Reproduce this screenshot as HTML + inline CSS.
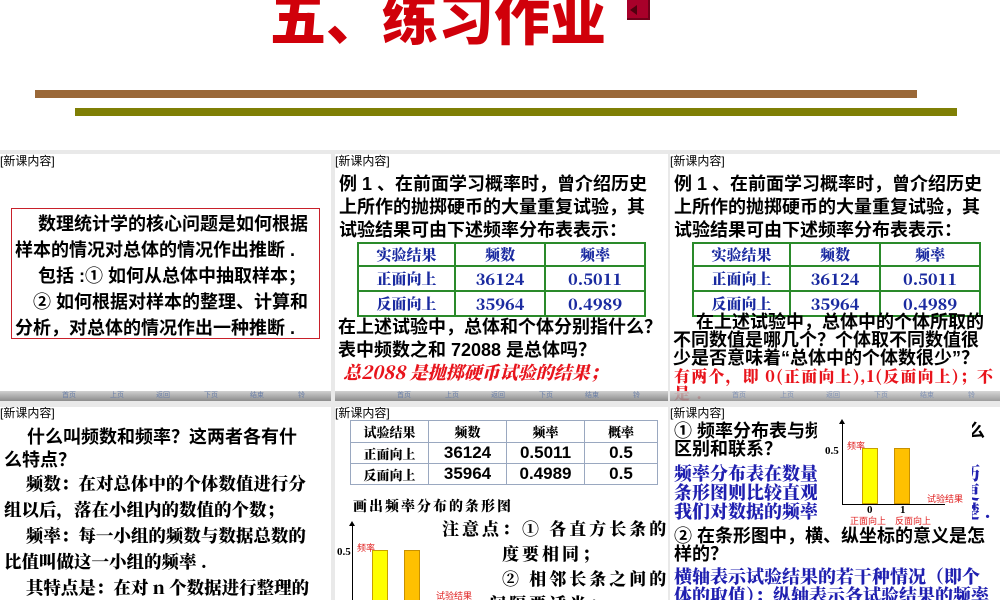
<!DOCTYPE html>
<html><head><meta charset="utf-8"><style>
*{margin:0;padding:0;box-sizing:border-box}
body{width:1000px;height:600px;overflow:hidden;background:#fff;position:relative;font-family:"Liberation Sans","Noto Sans CJK SC",sans-serif}
.a{position:absolute;white-space:nowrap}
.p{position:absolute;background:#fff;overflow:hidden}
.lab{position:absolute;left:0;top:1px;font-size:12px;color:#000;line-height:13px}
.b{font-weight:bold;font-size:18px;line-height:23px;color:#000}
.s{font-family:"Noto Serif CJK SC","Liberation Serif",serif;font-weight:900}
.nav{position:absolute;left:0;right:0;height:10px;background:linear-gradient(#d0d0d0,#8c8c8c);font-size:7px;color:#6a7fa8;line-height:10px}
.nav span{position:absolute;top:0}
table{border-collapse:collapse;position:absolute}
</style></head><body>
<div class="a" style="left:270px;top:-24px;font-size:56px;font-weight:900;color:#d0000a;letter-spacing:0px">五、练习作业</div>
<div class="a" style="left:627px;top:0;width:23px;height:20px;background:#a8002a;border-right:2px solid #70001a;border-bottom:2px solid #70001a"></div>
<div class="a" style="left:630px;top:5px;width:0;height:0;border-top:5px solid transparent;border-bottom:5px solid transparent;border-right:7px solid #50000f"></div>
<div class="a" style="left:35px;top:90px;width:882px;height:8px;background:#9a6838"></div>
<div class="a" style="left:75px;top:108px;width:882px;height:8px;background:#7f7f05"></div>
<div class="a" style="left:0;top:150px;width:1000px;height:450px;background:#e9e9e9"></div>

<!-- Row1 P1 -->
<div class="p" style="left:0;top:154px;width:331px;height:247px">
<div class="lab">[新课内容]</div>
<div class="a" style="left:11px;top:54px;width:309px;height:131px;border:1.5px solid #c8202a"></div>
<div class="a b" style="left:15px;top:57px;line-height:26px">　 数理统计学的核心问题是如何根据<br>样本的情况对总体的情况作出推断 .<br>　 包括 :① 如何从总体中抽取样本；<br>　② 如何根据对样本的整理、计算和<br>分析，对总体的情况作出一种推断 .</div>
<div class="nav" style="top:237px"><span style="left:62px">首页</span><span style="left:110px">上页</span><span style="left:156px">返回</span><span style="left:204px">下页</span><span style="left:250px">结束</span><span style="left:298px">铃</span></div>
</div>

<!-- Row1 P2 -->
<div class="p" style="left:335px;top:154px;width:333px;height:247px">
<div class="lab">[新课内容]</div>
<div class="a b" style="left:4px;top:19px">例 1 、在前面学习概率时，曾介绍历史<br>上所作的抛掷硬币的大量重复试验，其<br>试验结果可由下述频率分布表表示：</div>
<table class="s" style="left:22px;top:88px;width:289px;color:#1a2aa0;font-size:15px;text-align:center;border:2px solid #2a8a2a">
<tr style="height:23px"><td style="border:2px solid #2a8a2a;width:97px">实验结果</td><td style="border:2px solid #2a8a2a">频数</td><td style="border:2px solid #2a8a2a">频率</td></tr>
<tr style="height:22px"><td style="border:2px solid #2a8a2a">正面向上</td><td style="border:2px solid #2a8a2a;font-size:16px">36124</td><td style="border:2px solid #2a8a2a;font-size:16px">0.5011</td></tr>
<tr style="height:22px"><td style="border:2px solid #2a8a2a">反面向上</td><td style="border:2px solid #2a8a2a;font-size:16px">35964</td><td style="border:2px solid #2a8a2a;font-size:16px">0.4989</td></tr></table>
<div class="a b" style="left:3px;top:162px">在上述试验中，总体和个体分别指什么？<br>表中频数之和 72088 是总体吗？</div>
<div class="a s" style="left:8px;top:205px;color:#e8141c;font-size:18px;font-style:italic">总2088 是抛掷硬币试验的结果；</div>
<div class="nav" style="top:237px"><span style="left:62px">首页</span><span style="left:110px">上页</span><span style="left:156px">返回</span><span style="left:204px">下页</span><span style="left:250px">结束</span><span style="left:298px">铃</span></div>
</div>

<!-- Row1 P3 -->
<div class="p" style="left:670px;top:154px;width:330px;height:247px">
<div class="lab">[新课内容]</div>
<div class="a b" style="left:4px;top:19px">例 1 、在前面学习概率时，曾介绍历史<br>上所作的抛掷硬币的大量重复试验，其<br>试验结果可由下述频率分布表表示：</div>
<table class="s" style="left:22px;top:88px;width:289px;color:#1a2aa0;font-size:15px;text-align:center;border:2px solid #2a8a2a">
<tr style="height:23px"><td style="border:2px solid #2a8a2a;width:97px">实验结果</td><td style="border:2px solid #2a8a2a">频数</td><td style="border:2px solid #2a8a2a">频率</td></tr>
<tr style="height:22px"><td style="border:2px solid #2a8a2a">正面向上</td><td style="border:2px solid #2a8a2a;font-size:16px">36124</td><td style="border:2px solid #2a8a2a;font-size:16px">0.5011</td></tr>
<tr style="height:22px"><td style="border:2px solid #2a8a2a">反面向上</td><td style="border:2px solid #2a8a2a;font-size:16px">35964</td><td style="border:2px solid #2a8a2a;font-size:16px">0.4989</td></tr></table>
<div class="a b" style="left:3px;top:159px;line-height:18px">　 在上述试验中，总体中的个体所取的<br>不同数值是哪几个？个体取不同数值很<br>少是否意味着“总体中的个体数很少”？</div>
<div class="a s" style="left:4px;top:213px;color:#e8141c;font-size:16px;line-height:17px;letter-spacing:1.2px">有两个，即 0(正面向上),1(反面向上)；不<br>是 .</div>
<div class="nav" style="top:237px;opacity:.85"><span style="left:62px">首页</span><span style="left:110px">上页</span><span style="left:156px">返回</span><span style="left:204px">下页</span><span style="left:250px">结束</span><span style="left:298px">铃</span></div>
</div>

<!-- Row2 P1 -->
<div class="p" style="left:0;top:407px;width:331px;height:193px">
<div class="lab" style="top:0">[新课内容]</div>
<div class="a b" style="left:4px;top:19px;line-height:23px">　 什么叫频数和频率？这两者各有什<br>么特点？</div>
<div class="a s" style="left:4px;top:64px;font-size:17.5px;line-height:26px">　 频数：在对总体中的个体数值进行分<br>组以后，落在小组内的数值的个数；<br>　 频率：每一小组的频数与数据总数的<br>比值叫做这一小组的频率 .<br>　 其特点是：在对 n 个数据进行整理的<br>频率分布表中，各组频数的总和等于样</div>
</div>

<!-- Row2 P2 -->
<div class="p" style="left:335px;top:407px;width:333px;height:193px">
<div class="lab" style="top:0">[新课内容]</div>
<table style="left:15px;top:13px;width:308px;font-size:17px;font-weight:bold;text-align:center;border:1px solid #9aa8c0">
<tr style="height:22px" class="s"><td style="border:1px solid #9aa8c0;font-size:13px;width:78px">试验结果</td><td style="border:1px solid #9aa8c0;font-size:13px;width:78px">频数</td><td style="border:1px solid #9aa8c0;font-size:13px;width:78px">频率</td><td style="border:1px solid #9aa8c0;font-size:13px">概率</td></tr>
<tr style="height:21px"><td class="s" style="border:1px solid #9aa8c0;font-size:13px">正面向上</td><td style="border:1px solid #9aa8c0">36124</td><td style="border:1px solid #9aa8c0">0.5011</td><td style="border:1px solid #9aa8c0">0.5</td></tr>
<tr style="height:21px"><td class="s" style="border:1px solid #9aa8c0;font-size:13px">反面向上</td><td style="border:1px solid #9aa8c0">35964</td><td style="border:1px solid #9aa8c0">0.4989</td><td style="border:1px solid #9aa8c0">0.5</td></tr></table>
<div class="a s" style="left:18px;top:89px;font-size:14px;letter-spacing:2px">画出频率分布的条形图</div>
<div class="a" style="left:17px;top:116px;width:1px;height:80px;background:#000"></div>
<div class="a" style="left:14px;top:114px;width:0;height:0;border-left:3px solid transparent;border-right:3px solid transparent;border-bottom:5px solid #000"></div>
<div class="a" style="left:2px;top:139px;font-size:11px;font-family:'Liberation Serif',serif;font-weight:bold">0.5</div>
<div class="a" style="left:22px;top:134px;font-size:9px;color:#e02020">频率</div>
<div class="a" style="left:37px;top:143px;width:16px;height:60px;background:#ffff00;border:1px solid #c8a000"></div>
<div class="a" style="left:69px;top:143px;width:16px;height:60px;background:#ffc000;border:1px solid #c89000"></div>
<div class="a" style="left:101px;top:182px;font-size:9px;color:#e02020">试验结果</div>
<div class="a s" style="left:107px;top:108px;font-size:17px;line-height:25px;letter-spacing:3px">注意点：① 各直方长条的宽<br>　　　度要相同；<br>　　　② 相邻长条之间的<br>　　 间隔要适当；</div>
</div>

<!-- Row2 P3 -->
<div class="p" style="left:670px;top:407px;width:330px;height:193px">
<div class="lab" style="top:0">[新课内容]</div>
<div class="a b" style="left:4px;top:15px;line-height:18px">① 频率分布表与频　　　　　　　　么<br>区别和联系？</div>
<div class="a s" style="left:4px;top:57px;color:#2020b0;font-size:18px;line-height:19px">频率分布表在数量　　　　　　　　历<br>条形图则比较直观　　　　　　　　更<br>我们对数据的频率　　　　　　　　楚 .</div>
<div class="a b" style="left:4px;top:120px;line-height:18px">② 在条形图中，横、纵坐标的意义是怎<br>样的？</div>
<div class="a s" style="left:4px;top:160px;color:#2020b0;font-size:18px;line-height:19px">横轴表示试验结果的若干种情况（即个<br>体的取值）；纵轴表示各试验结果的频率</div>
<div class="a" style="left:147px;top:8px;width:155px;height:110px;background:#fff"></div>
<div class="a" style="left:172px;top:14px;width:1px;height:84px;background:#000"></div>
<div class="a" style="left:169px;top:12px;width:0;height:0;border-left:3px solid transparent;border-right:3px solid transparent;border-bottom:5px solid #000"></div>
<div class="a" style="left:172px;top:97px;width:103px;height:1px;background:#000"></div>
<div class="a" style="left:155px;top:38px;font-size:11px;font-family:'Liberation Serif',serif;font-weight:bold">0.5</div>
<div class="a" style="left:177px;top:32px;font-size:9px;color:#e02020">频率</div>
<div class="a" style="left:192px;top:41px;width:16px;height:56px;background:#ffff00;border:1px solid #c8a000"></div>
<div class="a" style="left:224px;top:41px;width:16px;height:56px;background:#ffc000;border:1px solid #c89000"></div>
<div class="a" style="left:257px;top:85px;font-size:9px;color:#e02020">试验结果</div>
<div class="a" style="left:197px;top:97px;font-size:11px;font-family:'Liberation Serif',serif;font-weight:bold">0</div>
<div class="a" style="left:230px;top:97px;font-size:11px;font-family:'Liberation Serif',serif;font-weight:bold">1</div>
<div class="a" style="left:180px;top:107px;font-size:9px;color:#e02020">正面向上　反面向上</div>
</div>
</body></html>
